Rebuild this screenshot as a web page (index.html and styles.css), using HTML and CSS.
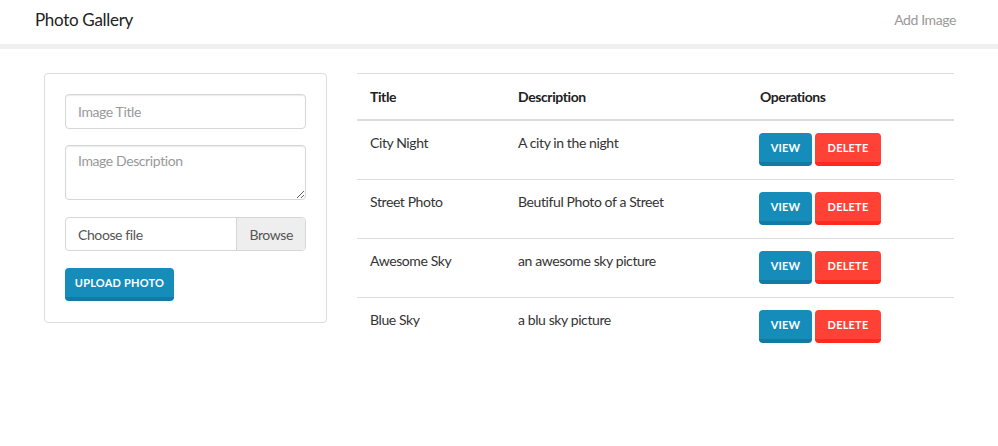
FILE: index.html
```html
<!DOCTYPE html>
<html>
<head>
<meta charset="utf-8">
<link rel="stylesheet" href="styles.css">
</head>
<body>
<nav class="navbar">
  <span class="brand">Photo Gallery</span>
  <a class="nav-link">Add Image</a>
</nav>
<main class="content">
  <section class="card">
    <input class="field" type="text" placeholder="Image Title">
    <textarea class="field area" placeholder="Image Description"></textarea>
    <div class="file">
      <span class="file-label">Choose file</span>
      <span class="file-btn">Browse</span>
    </div>
    <button class="btn btn-primary upload">Upload Photo</button>
  </section>
  <table class="table">
    <thead>
      <tr><th class="c1">Title</th><th class="c2">Description</th><th class="c3">Operations</th></tr>
    </thead>
    <tbody>
      <tr><td>City Night</td><td>A city in the night</td><td class="ops"><button class="btn btn-primary">View</button><button class="btn btn-danger">Delete</button></td></tr>
      <tr><td>Street Photo</td><td>Beutiful Photo of a Street</td><td class="ops"><button class="btn btn-primary">View</button><button class="btn btn-danger">Delete</button></td></tr>
      <tr><td>Awesome Sky</td><td>an awesome sky picture</td><td class="ops"><button class="btn btn-primary">View</button><button class="btn btn-danger">Delete</button></td></tr>
      <tr class="last"><td>Blue Sky</td><td>a blu sky picture</td><td class="ops"><button class="btn btn-primary">View</button><button class="btn btn-danger">Delete</button></td></tr>
    </tbody>
  </table>
</main>
</body>
</html>
```
FILE: styles.css
```css
* { box-sizing: border-box; }
body {
  margin: 0;
  font-family: Lato, "Liberation Sans", sans-serif;
  font-size: 14px;
  letter-spacing: -0.4px;
  color: #333;
  background: #fff;
}
.navbar {
  height: 49px;
  border-bottom: 5px solid #f0f0f0;
  display: flex;
  align-items: center;
  justify-content: space-between;
  padding: 0 42px 6px 35px;
}
.brand { font-size: 17px; color: #222; letter-spacing: -0.3px; }
.nav-link { font-size: 14px; color: #999; }
.content {
  display: flex;
  align-items: flex-start;
  padding: 24px 44px 0 44px;
  gap: 30px;
}
.card {
  width: 283px;
  flex: none;
  border: 1px solid #ddd;
  border-radius: 4px;
  padding: 20px 20px 21px 20px;
  display: flex;
  flex-direction: column;
}
.field {
  display: block;
  width: 100%;
  height: 35px;
  border: 1px solid #d6d6d6;
  border-radius: 4px;
  box-shadow: inset 0 1px 1px rgba(0,0,0,0.08);
  padding: 6px 12px;
  font-family: inherit;
  font-size: 14px;
  letter-spacing: -0.4px;
  color: #555;
  margin: 0 0 16px 0;
}
.field::placeholder { color: #999; }
.area { height: 55px; resize: vertical; margin-bottom: 17px; }
.file {
  display: flex;
  height: 34px;
  border: 1px solid #d6d6d6;
  border-radius: 4px;
  overflow: hidden;
  margin-bottom: 17px;
}
.file-label {
  flex: 1;
  display: flex;
  align-items: center;
  padding: 0 12px;
  color: #555;
}
.file-btn {
  display: flex;
  align-items: center;
  padding: 0 12px;
  background: #eee;
  border-left: 1px solid #d6d6d6;
  color: #555;
}
.btn {
  font-family: inherit;
  font-size: 11px;
  font-weight: 700;
  letter-spacing: 0.2px;
  text-transform: uppercase;
  color: #fff;
  border: 0;
  border-bottom: 4px solid;
  border-radius: 4px;
  height: 33px;
  padding: 0 12px;
  cursor: pointer;
}
.btn-primary { background: #158cba; border-bottom-color: #127ba3; }
.btn-danger { background: #ff4136; border-bottom-color: #ff291c; margin-left: 3px; }
.upload { width: 109px; padding: 0; }
.table {
  flex: 1;
  border-collapse: collapse;
  border-top: 1px solid #ddd;
}
.table th {
  text-align: left;
  font-weight: 700;
  color: #222;
  height: 46px;
  padding: 0 13px;
  border-bottom: 2px solid #ddd;
}
.table td {
  padding: 12px 13px 13px 13px;
  height: 58px;
  vertical-align: top;
  line-height: 20px;
  border-bottom: 1px solid #ddd;
}
.table td.ops { padding-left: 12px; }
.table tr.last td { border-bottom: 0; }
.c1 { width: 148px; }
.c2 { width: 242px; }
.table td .btn { width: 53px; padding: 0; }
.table td .btn-danger { width: 66px; }
```
